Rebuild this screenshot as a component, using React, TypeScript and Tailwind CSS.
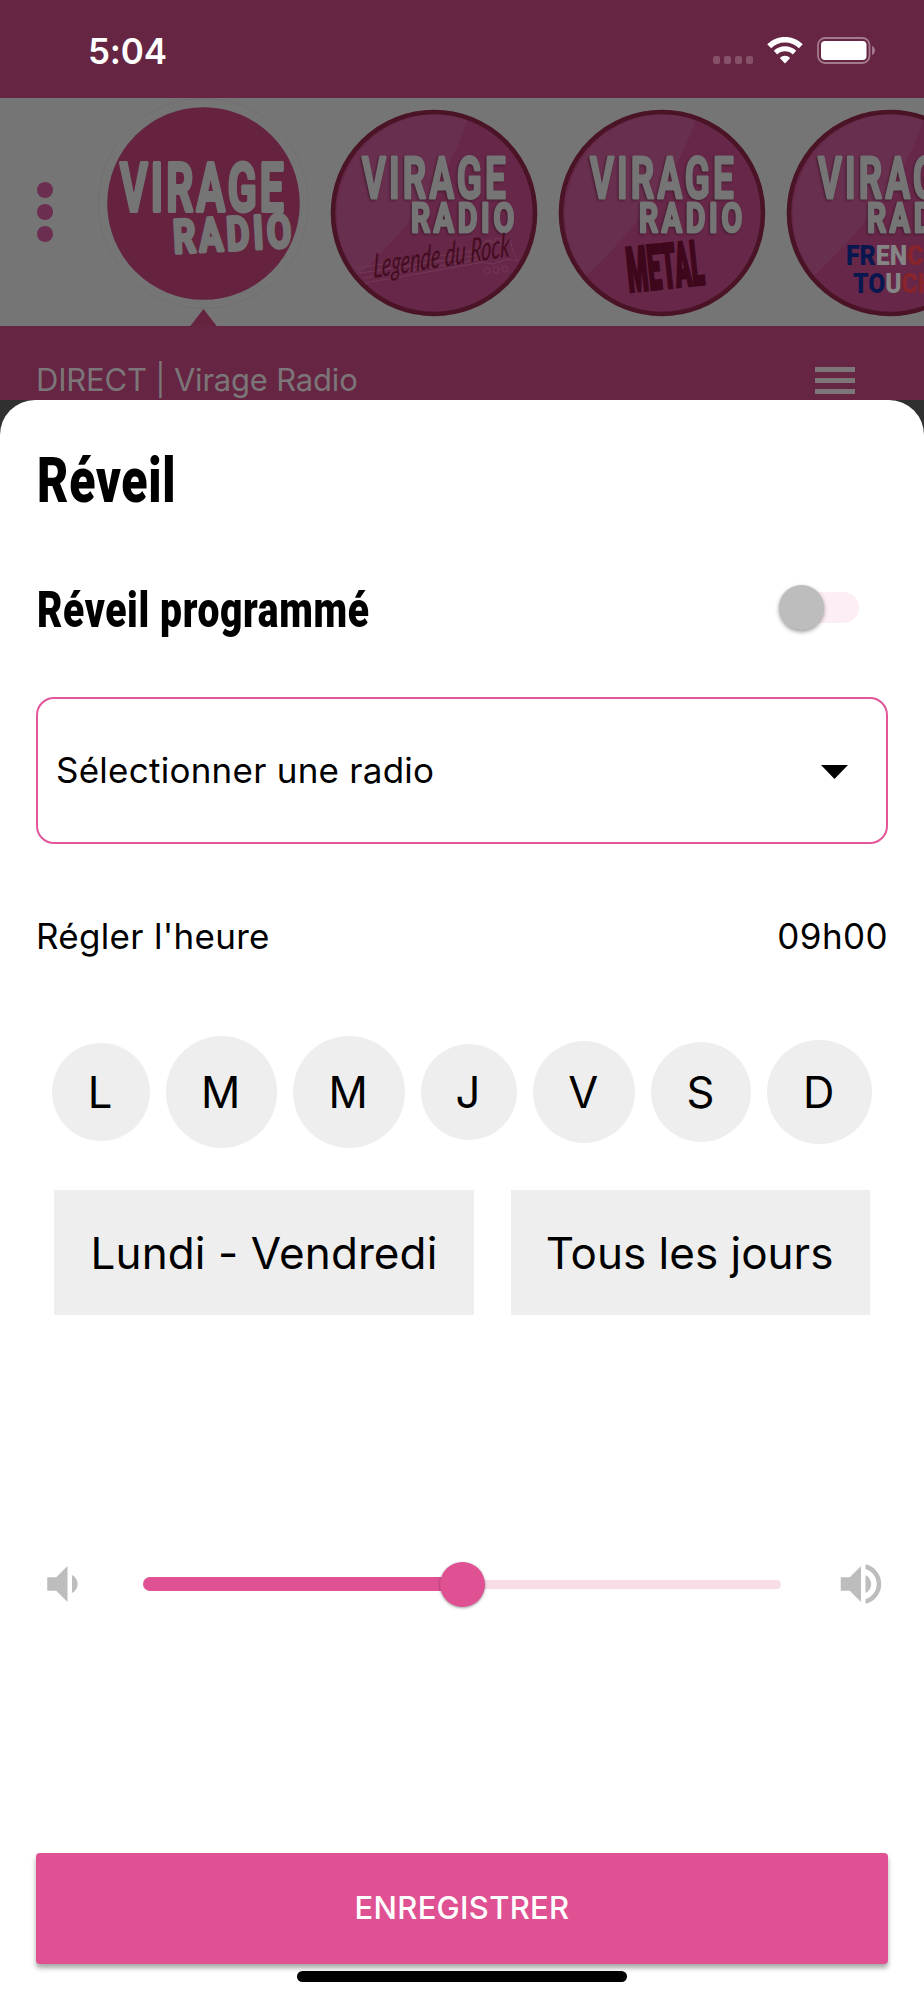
import type { ReactNode } from "react";

const DAYS = [
  { label: "L", size: 98 },
  { label: "M", size: 111.5 },
  { label: "M", size: 111.5 },
  { label: "J", size: 96 },
  { label: "V", size: 102.5 },
  { label: "S", size: 100 },
  { label: "D", size: 104.5 },
];

function StatusBar() {
  return (
    <div className="flex h-[98px] items-start bg-[#652543] pt-[31px] pr-[48px] pl-[88px]">
      <span className="text-[35px] leading-[40px] font-semibold tracking-[-0.2px] text-white">5:04</span>
      <div className="mt-[6px] ml-auto flex items-center">
        <div className="mt-[19px] flex gap-[3.5px]">
          {[0, 1, 2, 3].map((i) => (
            <span key={i} className="size-[7.5px] rounded-[2px] bg-[#875169]" />
          ))}
        </div>
        <svg className="ml-[14px] h-[27px] w-[36px]" viewBox="0 0 36 27" fill="none" stroke="#fff">
          <path d="M2.2 9.2a22.5 22.5 0 0 1 31.6 0" strokeWidth="5.6" />
          <path d="M8.5 15.6a13.5 13.5 0 0 1 19 0" strokeWidth="5" />
          <path d="M12.8 21a7.4 7.4 0 0 1 10.4 0L18 26.4z" fill="#fff" stroke="none" />
        </svg>
        <svg className="ml-[14px] h-[27px] w-[59px]" viewBox="0 0 59 27">
          <rect x="1" y="1" width="51.5" height="25" rx="7" fill="none" stroke="#a27a8c" strokeWidth="1.8" />
          <rect x="4" y="4" width="45.5" height="19" rx="4" fill="#fff" />
          <path d="M55 9c4 1 4 8 0 9z" fill="#a27a8c" />
        </svg>
      </div>
    </div>
  );
}

function MainLogo() {
  return (
    <svg className="h-[228px] w-[212px] shrink-0" viewBox="98 98 212 228">
      <circle cx="203.5" cy="203.5" r="105" fill="none" stroke="#706c6e" strokeWidth="0.7" />
      <circle cx="203.5" cy="203.5" r="96.3" fill="#652340" />
      <path d="M190 326.5 203.5 309 217 326.5z" fill="#652340" />
      <g
        fill="#757575"
        stroke="#757575"
        strokeWidth="4"
        strokeLinejoin="round"
        fontFamily="Roboto, sans-serif"
        fontWeight="600"
        letterSpacing="5"
      >
        <text x="120" y="211" fontSize="66" textLength="167" lengthAdjust="spacingAndGlyphs">
          VIRAGE
        </text>
        <text
          x="174"
          y="253"
          fontSize="46"
          textLength="122"
          lengthAdjust="spacingAndGlyphs"
          transform="rotate(-3 173 253)"
        >
          RADIO
        </text>
      </g>
    </svg>
  );
}

function StationLogo({ children }: { children: ReactNode }) {
  return (
    <svg className="h-[208px] w-[208px] shrink-0" viewBox="0 0 208 208">
      <circle cx="104" cy="104" r="101" fill="#672748" />
      <path d="M138 9Q116 84 28 167A101 101 0 0 1 138 9z" fill="#692f4e" />
      <circle cx="104" cy="104" r="101" fill="none" stroke="#4a1426" strokeWidth="4.6" />
      <g
        fill="#757575"
        stroke="#757575"
        strokeWidth="3"
        strokeLinejoin="round"
        fontFamily="Roboto, sans-serif"
        fontWeight="600"
        letterSpacing="5"
        className="drop-shadow-[-1px_1px_1px_rgba(50,20,35,0.7)]"
      >
        <text x="32" y="89" fontSize="57" textLength="147" lengthAdjust="spacingAndGlyphs">
          VIRAGE
        </text>
        <text x="81" y="123" fontSize="40" textLength="107" lengthAdjust="spacingAndGlyphs">
          RADIO
        </text>
      </g>
      {children}
    </svg>
  );
}

function Stations() {
  return (
    <div className="flex h-[228px] overflow-hidden bg-[#757575]">
      <div className="flex w-[98px] shrink-0 flex-col gap-[6.5px] pt-[84px] pl-[37px]">
        <span className="size-[15.5px] rounded-full bg-[#6b2e50]" />
        <span className="size-[15.5px] rounded-full bg-[#6b2e50]" />
        <span className="size-[15.5px] rounded-full bg-[#6b2e50]" />
      </div>
      <MainLogo />
      <div className="mt-[11px] ml-[20px] flex shrink-0 gap-[20px]">
        <StationLogo>
          <g fill="none" stroke="#733b58" strokeWidth="0.9">
            <path d="M26 159 150 141M35 174 154 153M30 164 150 146M33 169 152 150" />
            <path d="M145 141l14-10 11 5 10-5 3 11 5 10-10-2-15 5-14-2z" />
            <circle cx="158" cy="134" r="3" />
            <circle cx="168" cy="132" r="3" />
            <circle cx="157" cy="162" r="3" />
            <circle cx="166" cy="161" r="3" />
            <circle cx="175" cy="160" r="3" />
          </g>
          <text
            x="43"
            y="169"
            fontSize="33"
            fontFamily="Lato, sans-serif"
            fontStyle="italic"
            fill="#430c20"
            textLength="138"
            lengthAdjust="spacingAndGlyphs"
            transform="rotate(-9 43 169) skewX(-10) translate(30 0)"
          >
            Legende du Rock
          </text>
        </StationLogo>
        <StationLogo>
          <text
            x="71"
            y="183"
            fontSize="62"
            fontFamily="Roboto, sans-serif"
            fontWeight="900"
            fill="#3e071b"
            stroke="#3e071b"
            strokeWidth="3"
            textLength="77"
            lengthAdjust="spacingAndGlyphs"
            transform="rotate(-6 71 183)"
          >
            METAL
          </text>
        </StationLogo>
        <StationLogo>
          <g fontFamily="Roboto, sans-serif" fontWeight="900" fontSize="27">
            <text x="60" y="156" textLength="95" lengthAdjust="spacingAndGlyphs">
              <tspan fill="#081750">FR</tspan>
              <tspan fill="#858585">EN</tspan>
              <tspan fill="#87242c">CH</tspan>
            </text>
            <text x="67" y="184" textLength="82" lengthAdjust="spacingAndGlyphs">
              <tspan fill="#081750">TO</tspan>
              <tspan fill="#858585">U</tspan>
              <tspan fill="#87242c">CH</tspan>
            </text>
          </g>
        </StationLogo>
      </div>
    </div>
  );
}

function NowPlaying() {
  return (
    <div className="flex h-[74px] items-start justify-between bg-[#652543] pr-[69px] pl-[36px]">
      <span className="mt-[35px] text-[31px] leading-[38px] tracking-[-0.2px] text-[#7c7679]">DIRECT | Virage Radio</span>
      <div className="mt-[41px] flex w-[40px] flex-col gap-[6px]">
        <span className="h-[5px] bg-[#7c7679]" />
        <span className="h-[5px] bg-[#7c7679]" />
        <span className="h-[5px] bg-[#7c7679]" />
      </div>
    </div>
  );
}

function AlarmSheet() {
  return (
    <div className="flex h-[1600px] flex-col rounded-t-[35px] bg-white px-[36px] text-black">
      <h1 className="mt-[44px] ml-px h-[74px] w-max origin-left scale-x-[0.765] font-['Roboto'] text-[63px] leading-[74px] font-black tracking-[1px]">
        Réveil
      </h1>

      <div className="mt-[62px] flex h-[60px] items-center justify-between pr-[29px]">
        <h2 className="ml-px w-max origin-left scale-x-[0.78] font-['Roboto'] text-[50px] leading-[60px] font-black tracking-[0.8px]">
          Réveil programmé
        </h2>
        <div className="mb-[5px] flex h-[31px] w-[76px] items-center rounded-full bg-[#fdeef5]">
          <span className="-ml-[4px] size-[45px] rounded-full bg-[#bdbdbd] shadow-[0_2px_4px_rgba(0,0,0,0.4)]" />
        </div>
      </div>

      <div className="mt-[57px] flex h-[147px] items-center justify-between rounded-[18px] border-2 border-[#e2569a] pr-[38px] pl-[18px]">
        <span className="text-[35px] tracking-[0.25px]">Sélectionner une radio</span>
        <svg className="mt-[2px] h-[14px] w-[27px]" viewBox="0 0 28 14" preserveAspectRatio="none">
          <path d="M0 0h28L14 14z" />
        </svg>
      </div>

      <div className="mt-[67px] flex h-[50px] items-center justify-between text-[35px]">
        <span className="tracking-[0.3px]">Régler l'heure</span>
        <span className="tracking-[0.4px]">09h00</span>
      </div>

      <div className="mt-[74px] flex h-[114px] items-center justify-between pr-[16.5px] pl-[15.5px]">
        {DAYS.map((day, i) => (
          <span
            key={i}
            className="flex items-center justify-center rounded-full bg-[#eee] pt-px pr-px text-[43.5px]"
            style={{ width: day.size, height: day.size }}
          >
            {day.label}
          </span>
        ))}
      </div>

      <div className="mt-[41px] flex h-[125px] gap-[36.5px] px-[18px] text-[44px]">
        <span className="flex w-[420px] items-center justify-center bg-[#eee] tracking-[0.1px]">Lundi - Vendredi</span>
        <span className="flex w-[359px] items-center justify-center bg-[#eee] pr-px">Tous les jours</span>
      </div>

      <div className="mt-[242px] flex h-[54px] items-center justify-between text-[#bdbdbd]">
        <svg className="size-[54px]" viewBox="0 0 24 24" fill="currentColor">
          <path d="M18.5 12c0-1.77-1.02-3.29-2.5-4.03v8.05c1.48-.73 2.5-2.25 2.5-4.02zM5 9v6h4l5 5V4L9 9H5z" />
        </svg>
        <div className="flex w-[638px] items-center">
          <div className="h-[14px] w-[298px] rounded-l-full bg-[#e05194]" />
          <div className="z-10 -mx-px size-[45px] shrink-0 rounded-full bg-[#e05194] shadow-[0_1px_3px_rgba(0,0,0,0.4)]" />
          <div className="h-[9px] flex-1 rounded-r-full bg-[#f8dce8]" />
        </div>
        <svg className="size-[54px]" viewBox="0 0 24 24" fill="currentColor">
          <path d="M3 9v6h4l5 5V4L7 9H3zm13.5 3c0-1.77-1.02-3.29-2.5-4.03v8.05c1.48-.73 2.5-2.25 2.5-4.02zM14 3.23v2.06c2.89.86 5 3.54 5 6.71s-2.11 5.85-5 6.71v2.06c4.01-.91 7-4.49 7-8.77s-2.99-7.86-7-8.77z" />
        </svg>
      </div>

      <button className="mt-[241.5px] h-[111.5px] shrink-0 rounded-[4px] bg-[#e05194] text-[31px] font-medium tracking-[0.3px] text-white shadow-[0_4px_5px_rgba(0,0,0,0.35)]">
        ENREGISTRER
      </button>
      <div className="z-10 mt-[7px] h-[11px] w-[330px] self-center rounded-full bg-black" />
    </div>
  );
}

export default function App() {
  return (
    <div className="h-[2000px] w-[924px] overflow-hidden bg-[#303030] font-['Inter',sans-serif]">
      <StatusBar />
      <Stations />
      <NowPlaying />
      <AlarmSheet />
    </div>
  );
}
